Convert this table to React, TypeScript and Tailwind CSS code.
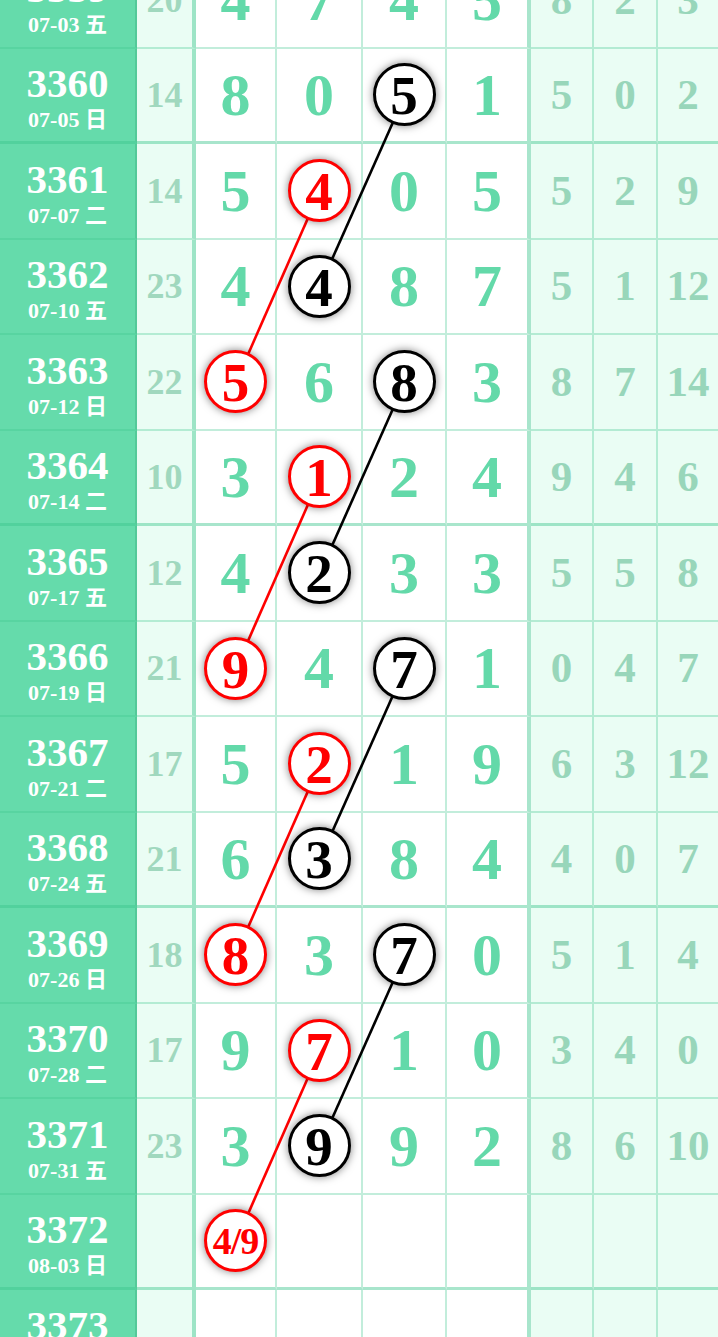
import React from "react";

type Mark = { col: number; red: boolean; label?: string };
type Row = {
  no: number;
  date: string;
  sum?: number;
  digits?: number[];
  tail?: number[];
  marks?: Mark[];
};

const rows: Row[] = [
  { no: 3359, date: "07-03 五", sum: 20, digits: [4, 7, 4, 5], tail: [8, 2, 3] },
  { no: 3360, date: "07-05 日", sum: 14, digits: [8, 0, 5, 1], tail: [5, 0, 2], marks: [{ col: 2, red: false }] },
  { no: 3361, date: "07-07 二", sum: 14, digits: [5, 4, 0, 5], tail: [5, 2, 9], marks: [{ col: 1, red: true }] },
  { no: 3362, date: "07-10 五", sum: 23, digits: [4, 4, 8, 7], tail: [5, 1, 12], marks: [{ col: 1, red: false }] },
  { no: 3363, date: "07-12 日", sum: 22, digits: [5, 6, 8, 3], tail: [8, 7, 14], marks: [{ col: 0, red: true }, { col: 2, red: false }] },
  { no: 3364, date: "07-14 二", sum: 10, digits: [3, 1, 2, 4], tail: [9, 4, 6], marks: [{ col: 1, red: true }] },
  { no: 3365, date: "07-17 五", sum: 12, digits: [4, 2, 3, 3], tail: [5, 5, 8], marks: [{ col: 1, red: false }] },
  { no: 3366, date: "07-19 日", sum: 21, digits: [9, 4, 7, 1], tail: [0, 4, 7], marks: [{ col: 0, red: true }, { col: 2, red: false }] },
  { no: 3367, date: "07-21 二", sum: 17, digits: [5, 2, 1, 9], tail: [6, 3, 12], marks: [{ col: 1, red: true }] },
  { no: 3368, date: "07-24 五", sum: 21, digits: [6, 3, 8, 4], tail: [4, 0, 7], marks: [{ col: 1, red: false }] },
  { no: 3369, date: "07-26 日", sum: 18, digits: [8, 3, 7, 0], tail: [5, 1, 4], marks: [{ col: 0, red: true }, { col: 2, red: false }] },
  { no: 3370, date: "07-28 二", sum: 17, digits: [9, 7, 1, 0], tail: [3, 4, 0], marks: [{ col: 1, red: true }] },
  { no: 3371, date: "07-31 五", sum: 23, digits: [3, 9, 9, 2], tail: [8, 6, 10], marks: [{ col: 1, red: false }] },
  { no: 3372, date: "08-03 日", marks: [{ col: 0, red: true, label: "4/9" }] },
  { no: 3373, date: "08-05 二" },
];

const ROW_H = 95.5;
const colX = [236, 320, 405, 489];

// pairs of [rowIndex, col] joined by a line
const redLinks = [
  [[2, 1], [4, 0]],
  [[5, 1], [7, 0]],
  [[8, 1], [10, 0]],
  [[11, 1], [13, 0]],
];
const blackLinks = [
  [[1, 2], [3, 1]],
  [[4, 2], [6, 1]],
  [[7, 2], [9, 1]],
  [[10, 2], [12, 1]],
];

const font = { fontFamily: '"Liberation Serif", "Noto Sans CJK SC", serif' };

function Ball({ mark, value }: { mark: Mark; value?: number }) {
  return (
    <div
      className={
        mark.red
          ? "relative z-10 flex h-[63px] w-[63px] items-center justify-center rounded-full border-[3px] border-[#ff0000] bg-white text-[#ff0000] shadow-[0_0_8px_rgba(0,0,0,0.5)]"
          : "relative z-10 flex h-[63px] w-[63px] items-center justify-center rounded-full border-[3px] border-black bg-white text-black shadow-[0_0_8px_rgba(0,0,0,0.5)]"
      }
    >
      {mark.label ? (
        <span className="text-[38px] font-bold leading-none tracking-[-1px]">{mark.label}</span>
      ) : (
        <span className="pt-[2px] text-[55px] font-bold leading-none">{value}</span>
      )}
    </div>
  );
}

function TrendRow({ row }: { row: Row }) {
  const thick = (row.no - 3360) % 4 === 0;
  const bb = thick ? "border-b-[3px] border-b-[#3cc68c70]" : "border-b-2 border-b-[#3cc68c50]";
  return (
    <div className="grid h-[95.5px] grid-cols-[137px_59px_81px_86px_84px_84px_63px_64px_60px]">
      <div className={`flex flex-col items-center justify-center border-r-2 border-r-[#2ea57350] bg-[#65dbab] pt-[4px] text-white ${bb}`}>
        <div className="text-[41px] font-bold leading-none">{row.no}</div>
        <div className="mt-[5px] text-[22px] font-bold leading-none">{row.date}</div>
      </div>
      <div className={`flex items-center justify-center border-r-[4px] border-r-[#3cc68c70] bg-[#eafdf4] text-[36px] font-bold text-[#a0d8be] ${bb}`}>
        {row.sum}
      </div>
      {[0, 1, 2, 3].map((c) => {
        const mark = row.marks?.find((m) => m.col === c);
        return (
          <div
            key={c}
            className={`flex items-center justify-center bg-white text-[60px] font-bold text-[#63d9a9] ${bb} ${
              c === 3 ? "border-r-[4px] border-r-[#3cc68c70]" : "border-r-2 border-r-[#3cc68c50]"
            }`}
          >
            {mark ? <Ball mark={mark} value={row.digits?.[c]} /> : row.digits?.[c]}
          </div>
        );
      })}
      {[0, 1, 2].map((c) => (
        <div
          key={c}
          className={`flex items-center justify-center bg-[#eafdf4] text-[43px] font-bold text-[#98d6ba] ${bb} ${
            c < 2 ? "border-r-2 border-r-[#3cc68c50]" : ""
          }`}
        >
          {row.tail?.[c]}
        </div>
      ))}
    </div>
  );
}

export default function App() {
  const pt = (r: number, c: number) => ({ x: colX[c], y: r * ROW_H + ROW_H / 2 - 1 });
  return (
    <div className="h-[1337px] w-[718px] overflow-hidden bg-white" style={font}>
      <div className="relative -mt-[47px]">
        {rows.map((row) => (
          <TrendRow key={row.no} row={row} />
        ))}
        <svg className="pointer-events-none absolute left-0 top-0 z-[5]" width={718} height={rows.length * ROW_H}>
          {redLinks.map(([a, b], i) => {
            const p = pt(a[0], a[1]);
            const q = pt(b[0], b[1]);
            return <line key={"r" + i} x1={p.x} y1={p.y} x2={q.x} y2={q.y} stroke="#ff0000" strokeWidth={2.6} />;
          })}
          {blackLinks.map(([a, b], i) => {
            const p = pt(a[0], a[1]);
            const q = pt(b[0], b[1]);
            return <line key={"b" + i} x1={p.x} y1={p.y} x2={q.x} y2={q.y} stroke="#000000" strokeWidth={2.6} />;
          })}
        </svg>
      </div>
    </div>
  );
}
